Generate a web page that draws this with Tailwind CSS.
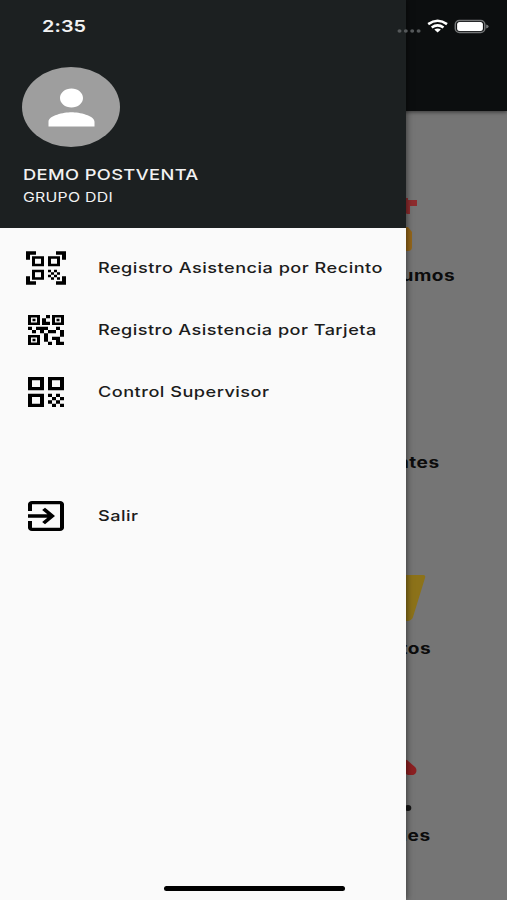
<!DOCTYPE html>
<html lang="es">
<head>
<meta charset="utf-8">
<meta name="viewport" content="width=device-width">
<title>Menú</title>
<script src="https://cdn.jsdelivr.net/npm/@tailwindcss/browser@4"></script>
</head>
<body class="font-['Inter','Liberation_Sans',sans-serif]">
<div class="relative h-[900px] w-[507px] overflow-hidden bg-[#757575]">
  <!-- Page behind the drawer -->
  <div class="h-[111px] bg-[#0c0e0f] shadow-[0_1px_4px_rgba(0,0,0,0.55)]"></div>
  <main class="flex flex-col pl-[380px] text-[15px] leading-[22px] font-bold text-[#0c0c0c]">
    <section class="flex h-[187px] flex-col pt-[87px]">
      <svg class="h-[67px] w-12 shrink-0" viewBox="0 0 48 67"><path d="M20 0h8v2h9v6h-7v8h-3l-7-6z" fill="#8e2c2e"/><path d="M20 29h8l4 5v15q0 4-4 4h-8z" fill="#94661a"/></svg>
      <div class="w-[75px] text-right"><span class="inline-block origin-right scale-x-[1.27] tracking-[0.4px]">umos</span></div>
    </section>
    <section class="flex h-[187px] flex-col pt-[154px]">
      <div class="w-[60px] text-right"><span class="inline-block origin-right scale-x-[1.27] tracking-[0.4px]">ntes</span></div>
    </section>
    <section class="flex h-[187px] flex-col pt-[89px]">
      <svg class="h-[64px] w-12 shrink-0" viewBox="0 0 48 64"><path d="M18 1h25q3 0 2 3L33 43q-1 3-5 4H18z" fill="#8c7219"/></svg>
      <div class="w-[51px] text-right"><span class="inline-block origin-right scale-x-[1.27] tracking-[0.4px]">tos</span></div>
    </section>
    <section class="flex flex-col pt-[87px]">
      <svg class="h-[66px] w-12 shrink-0" viewBox="0 0 48 66"><path d="M20 0l7 1 8 7c3 3 1 8-3 8h-4l-8-4z" fill="#8c2022"/><ellipse cx="28" cy="49" rx="3.3" ry="3" fill="#151515"/></svg>
      <div class="w-[51px] text-right"><span class="inline-block origin-right scale-x-[1.27] tracking-[0.4px]">les</span></div>
    </section>
  </main>

  <!-- Drawer -->
  <aside class="absolute inset-y-0 left-0 w-[406px] bg-[#fafafa] shadow-[1px_0_6px_rgba(0,0,0,0.5)]">
    <header class="flex h-[228px] flex-col bg-[#1c2021] pt-[67px] pl-[22px] text-[#f2f2f2]">
      <div class="flex h-[80px] w-[98px] items-center justify-center rounded-[50%] bg-[#9e9e9e]">
        <svg class="h-[57px] w-[69px]" viewBox="0 0 24 24" preserveAspectRatio="none" fill="#fff"><path d="M12 12c2.21 0 4-1.79 4-4s-1.79-4-4-4-4 1.79-4 4 1.79 4 4 4zm0 2c-2.67 0-8 1.34-8 4v2h16v-2c0-2.66-5.33-4-8-4z"/></svg>
      </div>
      <div class="mt-[17px] pl-px text-[15px] leading-[22px] font-medium whitespace-nowrap"><span class="inline-block origin-left scale-x-[1.22] tracking-[0.3px]">DEMO POSTVENTA</span></div>
      <div class="pl-px text-[13px] leading-[22px] whitespace-nowrap"><span class="inline-block origin-left scale-x-[1.22] tracking-[0.2px]">GRUPO DDI</span></div>
    </header>
    <nav class="flex flex-col pt-[9px] text-[14.5px] text-[#1c1c1c] [&_span]:font-[450]">
      <a class="flex h-[62px] items-center gap-7 pl-[22px] whitespace-nowrap">
        <svg class="h-10 w-12 shrink-0" viewBox="0 0 24 24" preserveAspectRatio="none" fill="#000"><path d="M9.5 6.5v3h-3v-3h3M11 5H5v6h6V5zm-1.5 9.5v3h-3v-3h3M11 13H5v6h6v-6zm6.5-6.5v3h-3v-3h3M19 5h-6v6h6V5zm-6 8h1.5v1.5H13V13zm1.5 1.5H16V16h-1.5v-1.5zM16 13h1.5v1.5H16V13zm-3 3h1.5v1.5H13V16zm1.5 1.5H16V19h-1.5v-1.5zM16 16h1.5v1.5H16V16zm1.5-1.5H19V16h-1.5v-1.5zm0 3H19V19h-1.5v-1.5zM22 7h-2V4h-3V2h5v5zm0 15v-5h-2v3h-3v2h5zM2 22h5v-2H4v-3H2v5zM2 2v5h2V4h3V2H2z"/></svg>
        <span class="origin-left scale-x-[1.25] tracking-[0.39px]">Registro Asistencia por Recinto</span>
      </a>
      <a class="flex h-[62px] items-center gap-7 pl-[22px] whitespace-nowrap">
        <svg class="h-10 w-12 shrink-0" viewBox="0 0 24 24" preserveAspectRatio="none" fill="#000"><path d="M15 21h-2v-2h2v2zm-2-7h-2v5h2v-5zm8-2h-2v4h2v-4zm-2-2h-2v2h2v-2zM7 12H5v2h2v-2zm-2-2H3v2h2v-2zm7-5h2V3h-2v2zm-7.5-.5v3h3v-3h-3zM9 9H3V3h6v6zm-4.5 7.5v3h3v-3h-3zM9 21H3v-6h6v6zm7.5-16.5v3h3v-3h-3zM21 9h-6V3h6v6zm-2 10v-3h-4v2h2v3h4v-2h-2zm-2-7h-4v2h4v-2zm-4-2H7v2h2v2h2v-2h2v-2zm1-1V7h-2V5h-2v4h4zM6.75 5.25h-1.5v1.5h1.5v-1.5zm0 12h-1.5v1.5h1.5v-1.5zm12-12h-1.5v1.5h1.5v-1.5z"/></svg>
        <span class="origin-left scale-x-[1.25] tracking-[0.36px]">Registro Asistencia por Tarjeta</span>
      </a>
      <a class="flex h-[62px] items-center gap-7 pl-[22px] whitespace-nowrap">
        <svg class="h-10 w-12 shrink-0" viewBox="0 0 24 24" preserveAspectRatio="none" fill="#000"><path d="M3 11h8V3H3v8zm2-6h4v4H5V5zM3 21h8v-8H3v8zm2-6h4v4H5v-4zM13 3v8h8V3h-8zm6 6h-4V5h4v4zM19 19h2v2h-2zM13 13h2v2h-2zM15 15h2v2h-2zM13 17h2v2h-2zM15 19h2v2h-2zM17 17h2v2h-2zM17 13h2v2h-2zM19 15h2v2h-2z"/></svg>
        <span class="origin-left scale-x-[1.25] tracking-[0.39px]">Control Supervisor</span>
      </a>
      <a class="mt-[62px] flex h-[62px] items-center gap-7 pl-[22px] whitespace-nowrap">
        <svg class="h-10 w-12 shrink-0" viewBox="0 0 24 24" preserveAspectRatio="none" fill="#000"><path d="M10.09 15.59L11.5 17l5-5-5-5-1.41 1.41L12.67 11H3v2h9.67l-2.58 2.59zM19 3H5c-1.11 0-2 .9-2 2v4h2V5h14v14H5v-4H3v4c0 1.1.89 2 2 2h14c1.1 0 2-.9 2-2V5c0-1.1-.9-2-2-2z"/></svg>
        <span class="origin-left scale-x-[1.25] tracking-[0.39px]">Salir</span>
      </a>
    </nav>
  </aside>

  <!-- System overlays -->
  <div class="absolute inset-x-0 top-0 flex h-[53px] items-center justify-between pr-[18px] pl-[42px] text-white">
    <span class="origin-left scale-x-[1.2] text-[16.5px] font-semibold tracking-[0.1px] text-[#f2f2f2]">2:35</span>
    <svg class="h-[20px] w-[92px]" viewBox="0 0 92 20">
      <g fill="#55585a"><ellipse cx="2.5" cy="14" rx="2" ry="1.7"/><ellipse cx="8.8" cy="14" rx="2" ry="1.7"/><ellipse cx="15.2" cy="14" rx="2" ry="1.7"/><ellipse cx="21.6" cy="14" rx="2" ry="1.7"/></g>
      <g fill="none" stroke="#fff" stroke-width="2.6"><path d="M31.2 7.1Q40.600 .4 50 7.100"/><path d="M34.700 10.500Q40.600 6.200 46.500 10.500"/></g>
      <path d="M37.300 12.500Q40.600 10.300 43.900 12.500L40.600 15.600z" fill="#fff"/>
      <rect x="58.300" y="3.500" width="29.500" height="12" rx="4" fill="none" stroke="#747677" stroke-width="1.500"/>
      <rect x="60.100" y="5" width="25.800" height="9" rx="2.500" fill="#fff"/>
      <path d="M89.100 7.500q2.500 .6 2.500 2t-2.500 2z" fill="#747677"/>
    </svg>
  </div>
  <div class="absolute bottom-[9px] left-[164px] h-[5px] w-[181px] rounded-full bg-black"></div>
</div>
</body>
</html>
